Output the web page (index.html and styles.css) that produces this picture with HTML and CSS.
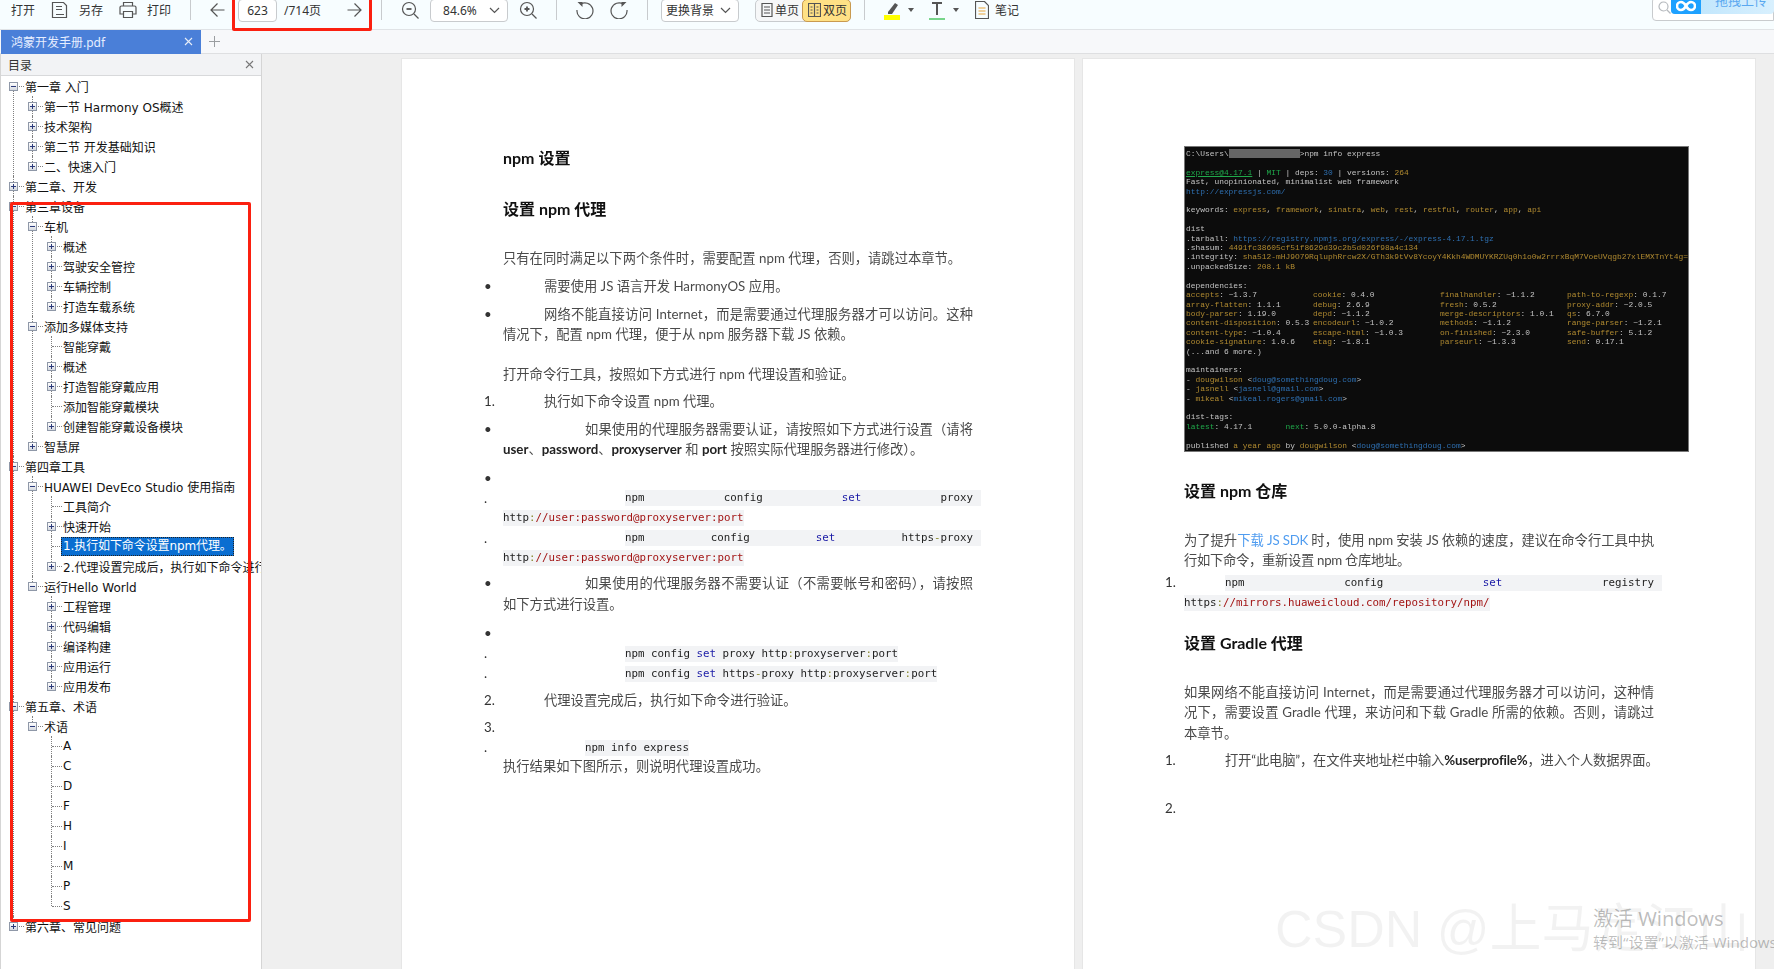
FILE: index.html
```html
<!DOCTYPE html>
<html lang="zh-CN">
<head>
    <meta charset="UTF-8">
    <title>鸿蒙开发手册.pdf</title>
    <link rel="stylesheet" href="styles.css">
</head>
<body>
<div class="app">
    <div class="toolbar">
        <div class="group file">
            <span>打开</span>
            <span class="tool">
                <svg class="ico" width="18" height="18" viewBox="0 0 18 18"><path d="M1.5 1.5h11l3 3v12h-14zM5 5.5h6M5 8.5h6M5 13.500h8"/></svg>
                另存
            </span>
            <span class="tool">
                <svg class="ico" width="18" height="18" viewBox="0 0 18 18"><path d="M4.500 5V1.500h9V5M4.500 13H1V6.500a1.500 1.500 0 0 1 1.500-1.500h13a1.500 1.500 0 0 1 1.500 1.500V13h-3.500M4.500 10.500h9v6h-9z"/></svg>
                打印
            </span>
        </div>
        <i class="sep"></i>
        <div class="group pager">
            <svg class="ico" width="15" height="16" viewBox="0 0 15 16"><path d="M14.500 8H1M7.500 1.500 1 8l6.500 6.500"/></svg>
            <span class="box page-no">623</span>
            <span class="total">/714页</span>
            <svg class="ico" width="15" height="16" viewBox="0 0 15 16"><path d="M.5 8H14M7.500 1.500 14 8l-6.500 6.500"/></svg>
        </div>
        <i class="sep"></i>
        <div class="group zoom">
            <svg class="ico" width="18" height="18" viewBox="0 0 18 18"><circle cx="8" cy="8" r="6.500"/><path d="M13 13l4.500 4.500"/><path class="bold" d="M5.500 8h5"/></svg>
            <span class="box combo percent">84.6%
                <svg class="chev" width="11" height="7" viewBox="0 0 11 7"><path d="M1 1l4.500 4.500L10 1"/></svg>
            </span>
            <svg class="ico" width="18" height="18" viewBox="0 0 18 18"><circle cx="8" cy="8" r="6.500"/><path d="M13 13l4.500 4.500"/><path class="bold" d="M5.500 8h5M8 5.500v5"/></svg>
        </div>
        <i class="sep"></i>
        <div class="group rotate">
            <svg class="ico" width="18" height="18" viewBox="0 0 18 18"><path d="M4.500 3.200A8 8 0 1 1 1 9"/><path class="solid" d="M1.500 1 6.500 1 6.500 6z"/></svg>
            <svg class="ico" width="18" height="18" viewBox="0 0 18 18"><path d="M13.500 3.200A8 8 0 1 0 17 9"/><path class="solid" d="M16.500 1 11.500 1 11.500 6z"/></svg>
        </div>
        <i class="sep sep-tight-r"></i>
        <span class="box combo background">更换背景
            <svg class="chev" width="11" height="7" viewBox="0 0 11 7"><path d="M1 1l4.500 4.500L10 1"/></svg>
        </span>
        <div class="segment">
            <span class="seg">
                <svg class="ico" width="12" height="14" viewBox="0 0 12 14"><path d="M1 .5h10v13H1zM3 4h6M3 7h6M3 10h6"/></svg>
                单页
            </span>
            <span class="seg on">
                <svg class="ico" width="13" height="14" viewBox="0 0 13 14"><path d="M.5.5h12v13H.5zM6.500.5v13M2.500 4h2M2.500 7h2M2.500 10h2M8.500 4h2M8.500 7h2M8.500 10h2"/></svg>
                双页
            </span>
        </div>
        <i class="sep sep-tight-l"></i>
        <div class="group marks">
            <span class="mark-tool">
                <svg width="16" height="19" viewBox="0 0 16 19"><path fill="#555" d="M4 11 11 2l3 2-6 9H4z"/><rect y="14" width="16" height="5.500" fill="#ffff00"/></svg>
                <i class="caret"></i>
            </span>
            <span class="mark-tool">
                <svg class="ico" width="16" height="19" viewBox="0 0 16 19"><path class="thick" d="M3 2h10M8 2v12"/><rect y="17" width="16" height="2" fill="#77d58a" stroke="none"/></svg>
                <i class="caret"></i>
            </span>
            <span class="tool note">
                <svg class="ico" width="14" height="18" viewBox="0 0 14 18"><path d="M.5.5h9l4 4v13H.5z"/><path class="orange" d="M3.500 7h7M3.500 10h7M3.500 13h7"/></svg>
                笔记
            </span>
        </div>
        <div class="search">
            <svg class="ico light" width="13" height="13" viewBox="0 0 13 13"><circle cx="5.500" cy="5.500" r="4.500"/><path d="M9 9l3.500 3.500"/></svg>
            <div class="upload">
                <span class="upload-logo">
                    <svg width="20" height="12" viewBox="0 0 20 12"><path d="M10 6C8 2.500 6.500 2 5 2a4 4 0 0 0 0 8c1.500 0 3-.5 5-4s3.500-4 5-4a4 4 0 0 1 0 8c-1.500 0-3-.5-5-4z"/></svg>
                </span>
                <span class="upload-text">拖拽上传</span>
            </div>
        </div>
    </div>

    <div class="tabbar">
        <div class="tab">鸿蒙开发手册.pdf
            <svg class="x" width="9" height="9" viewBox="0 0 9 9"><path d="M1 1l7 7M8 1 1 8"/></svg>
        </div>
        <svg class="add" width="11" height="11" viewBox="0 0 11 11"><path d="M5.500 0v11M0 5.500h11"/></svg>
    </div>

    <div class="main">
        <aside class="sidebar">
            <div class="side-head">目录
                <svg class="x" width="9" height="9" viewBox="0 0 9 9"><path d="M1 1l7 7M8 1 1 8"/></svg>
            </div>
            <ul class="tree">
                <li><div class="row"><i class="twist minus"></i><span>第一章 入门</span></div>
                    <ul>
                        <li><div class="row"><i class="twist plus"></i><span>第一节 Harmony OS概述</span></div></li>
                        <li><div class="row"><i class="twist plus"></i><span>技术架构</span></div></li>
                        <li><div class="row"><i class="twist plus"></i><span>第二节 开发基础知识</span></div></li>
                        <li><div class="row"><i class="twist plus"></i><span>二、快速入门</span></div></li>
                    </ul>
                </li>
                <li><div class="row"><i class="twist plus"></i><span>第二章、开发</span></div></li>
                <li><div class="row"><i class="twist minus"></i><span>第三章设备</span></div>
                    <ul>
                        <li><div class="row"><i class="twist minus"></i><span>车机</span></div>
                            <ul>
                                <li><div class="row"><i class="twist plus"></i><span>概述</span></div></li>
                                <li><div class="row"><i class="twist plus"></i><span>驾驶安全管控</span></div></li>
                                <li><div class="row"><i class="twist plus"></i><span>车辆控制</span></div></li>
                                <li><div class="row"><i class="twist plus"></i><span>打造车载系统</span></div></li>
                            </ul>
                        </li>
                        <li><div class="row"><i class="twist minus"></i><span>添加多媒体支持</span></div>
                            <ul>
                                <li><div class="row"><i class="twist leaf"></i><span>智能穿戴</span></div></li>
                                <li><div class="row"><i class="twist plus"></i><span>概述</span></div></li>
                                <li><div class="row"><i class="twist plus"></i><span>打造智能穿戴应用</span></div></li>
                                <li><div class="row"><i class="twist leaf"></i><span>添加智能穿戴模块</span></div></li>
                                <li><div class="row"><i class="twist plus"></i><span>创建智能穿戴设备模块</span></div></li>
                            </ul>
                        </li>
                        <li><div class="row"><i class="twist plus"></i><span>智慧屏</span></div></li>
                    </ul>
                </li>
                <li><div class="row"><i class="twist minus"></i><span>第四章工具</span></div>
                    <ul>
                        <li><div class="row"><i class="twist minus"></i><span>HUAWEI DevEco Studio 使用指南</span></div>
                            <ul>
                                <li><div class="row"><i class="twist leaf"></i><span>工具简介</span></div></li>
                                <li><div class="row"><i class="twist plus"></i><span>快速开始</span></div></li>
                                <li><div class="row"><i class="twist leaf"></i><span class="sel">1.执行如下命令设置npm代理。</span></div></li>
                                <li><div class="row"><i class="twist plus"></i><span>2.代理设置完成后，执行如下命令进行验证。</span></div></li>
                            </ul>
                        </li>
                        <li><div class="row"><i class="twist minus"></i><span>运行Hello World</span></div>
                            <ul>
                                <li><div class="row"><i class="twist plus"></i><span>工程管理</span></div></li>
                                <li><div class="row"><i class="twist plus"></i><span>代码编辑</span></div></li>
                                <li><div class="row"><i class="twist plus"></i><span>编译构建</span></div></li>
                                <li><div class="row"><i class="twist plus"></i><span>应用运行</span></div></li>
                                <li><div class="row"><i class="twist plus"></i><span>应用发布</span></div></li>
                            </ul>
                        </li>
                    </ul>
                </li>
                <li><div class="row"><i class="twist minus"></i><span>第五章、术语</span></div>
                    <ul>
                        <li><div class="row"><i class="twist minus"></i><span>术语</span></div>
                            <ul>
                                <li><div class="row"><i class="twist leaf"></i><span>A</span></div></li>
                                <li><div class="row"><i class="twist leaf"></i><span>C</span></div></li>
                                <li><div class="row"><i class="twist leaf"></i><span>D</span></div></li>
                                <li><div class="row"><i class="twist leaf"></i><span>F</span></div></li>
                                <li><div class="row"><i class="twist leaf"></i><span>H</span></div></li>
                                <li><div class="row"><i class="twist leaf"></i><span>I</span></div></li>
                                <li><div class="row"><i class="twist leaf"></i><span>M</span></div></li>
                                <li><div class="row"><i class="twist leaf"></i><span>P</span></div></li>
                                <li><div class="row"><i class="twist leaf"></i><span>S</span></div></li>
                            </ul>
                        </li>
                    </ul>
                </li>
                <li><div class="row"><i class="twist plus"></i><span>第六章、常见问题</span></div></li>
            </ul>
        </aside>

        <div class="viewer">
            <section class="page first">
                <h2 class="t-first">npm 设置</h2>
                <h2 class="t-next">设置 npm 代理</h2>
                <p class="after-title">只有在同时满足以下两个条件时，需要配置 npm 代理，否则，请跳过本章节。</p>
                <p class="ind1 gap-8"><span class="mark">•</span>需要使用 JS 语言开发 HarmonyOS 应用。</p>
                <p class="ind1"><span class="mark">•</span>网络不能直接访问 Internet，而是需要通过代理服务器才可以访问。这种情况下，配置 npm 代理，便于从 npm 服务器下载 JS 依赖。</p>
                <p class="gap-19">打开命令行工具，按照如下方式进行 npm 代理设置和验证。</p>
                <p class="ind1"><span class="mark">1.</span>执行如下命令设置 npm 代理。</p>
                <p class="ind2"><span class="mark">•</span>如果使用的代理服务器需要认证，请按照如下方式进行设置（请将 <b>user</b>、<b>password</b>、<b>proxyserver</b> 和 <b>port</b> 按照实际代理服务器进行修改）。</p>
                <p class="gap-8"><span class="mark">•</span>&nbsp;</p>
                <div class="line"><span class="mark m3">.</span><code class="cmd just">npm config <em>set</em> proxy</code></div>
                <div class="line"><code class="cmd">http<u>:</u><s>//user:password@proxyserver:port</s></code></div>
                <div class="line"><span class="mark m3">.</span><code class="cmd just">npm config <em>set</em> https<u>-</u>proxy</code></div>
                <div class="line"><code class="cmd">http<u>:</u><s>//user:password@proxyserver:port</s></code></div>
                <p class="ind2 gap-5"><span class="mark">•</span>如果使用的代理服务器不需要认证（不需要帐号和密码），请按照如下方式进行设置。</p>
                <p class="gap-9"><span class="mark">•</span>&nbsp;</p>
                <div class="line"><span class="mark m3">.</span><code class="cmd">npm config <em>set</em> proxy http<u>:</u>proxyserver<u>:</u>port</code></div>
                <div class="line"><span class="mark m3">.</span><code class="cmd">npm config <em>set</em> https<u>-</u>proxy http<u>:</u>proxyserver<u>:</u>port</code></div>
                <p class="ind1 gap-6"><span class="mark">2.</span>代理设置完成后，执行如下命令进行验证。</p>
                <p><span class="mark">3.</span>&nbsp;</p>
                <div class="line"><span class="mark m2">.</span><code class="cmd">npm info express</code></div>
                <p class="gap-neg">执行结果如下图所示，则说明代理设置成功。</p>
            </section>

            <section class="page second">
                <div class="term">
                    <div>C:\Users\<span class="hidden-name">               </span>&gt;npm info express</div>
                    <div>&nbsp;</div>
                    <div><span class="lnk-g">express@4.17.1</span> | <span class="g">MIT</span> | deps: <span class="c">30</span> | versions: <span class="y">264</span></div>
                    <div>Fast, unopinionated, minimalist web framework</div>
                    <div class="c">http://expressjs.com/</div>
                    <div>&nbsp;</div>
                    <div>keywords: <span class="y">express</span>, <span class="y">framework</span>, <span class="y">sinatra</span>, <span class="y">web</span>, <span class="y">rest</span>, <span class="y">restful</span>, <span class="y">router</span>, <span class="y">app</span>, <span class="y">api</span></div>
                    <div>&nbsp;</div>
                    <div>dist</div>
                    <div>.tarball: <span class="c">https://registry.npmjs.org/express/-/express-4.17.1.tgz</span></div>
                    <div>.shasum: <span class="y">4491fc38605cf51f8629d39c2b5d026f98a4c134</span></div>
                    <div>.integrity: <span class="y">sha512-mHJ9O79RqluphRrcw2X/GTh3k9tVv8YcoyY4Kkh4WDMUYKRZUq0h1o0w2rrrxBqM7VoeUVqgb27xlEMXTnYt4g==</span></div>
                    <div>.unpackedSize: <span class="y">208.1 kB</span></div>
                    <div>&nbsp;</div>
                    <div>dependencies:</div>
                    <div class="deps">
                        <span><span class="y">accepts</span>: ~1.3.7</span><span><span class="y">cookie</span>: 0.4.0</span><span><span class="y">finalhandler</span>: ~1.1.2</span><span><span class="y">path-to-regexp</span>: 0.1.7</span>
                        <span><span class="y">array-flatten</span>: 1.1.1</span><span><span class="y">debug</span>: 2.6.9</span><span><span class="y">fresh</span>: 0.5.2</span><span><span class="y">proxy-addr</span>: ~2.0.5</span>
                        <span><span class="y">body-parser</span>: 1.19.0</span><span><span class="y">depd</span>: ~1.1.2</span><span><span class="y">merge-descriptors</span>: 1.0.1</span><span><span class="y">qs</span>: 6.7.0</span>
                        <span><span class="y">content-disposition</span>: 0.5.3</span><span><span class="y">encodeurl</span>: ~1.0.2</span><span><span class="y">methods</span>: ~1.1.2</span><span><span class="y">range-parser</span>: ~1.2.1</span>
                        <span><span class="y">content-type</span>: ~1.0.4</span><span><span class="y">escape-html</span>: ~1.0.3</span><span><span class="y">on-finished</span>: ~2.3.0</span><span><span class="y">safe-buffer</span>: 5.1.2</span>
                        <span><span class="y">cookie-signature</span>: 1.0.6</span><span><span class="y">etag</span>: ~1.8.1</span><span><span class="y">parseurl</span>: ~1.3.3</span><span><span class="y">send</span>: 0.17.1</span>
                    </div>
                    <div>(...and 6 more.)</div>
                    <div>&nbsp;</div>
                    <div>maintainers:</div>
                    <div>- <span class="y">dougwilson</span> &lt;<span class="c">doug@somethingdoug.com</span>&gt;</div>
                    <div>- <span class="y">jasnell</span> &lt;<span class="c">jasnell@gmail.com</span>&gt;</div>
                    <div>- <span class="y">mikeal</span> &lt;<span class="c">mikeal.rogers@gmail.com</span>&gt;</div>
                    <div>&nbsp;</div>
                    <div>dist-tags:</div>
                    <div><span class="g">latest</span>: 4.17.1       <span class="g">next</span>: 5.0.0-alpha.8</div>
                    <div>&nbsp;</div>
                    <div>published <span class="y">a year ago</span> by <span class="y">dougwilson</span> &lt;<span class="c">doug@somethingdoug.com</span>&gt;</div>
                </div>
                <h2 class="t-term">设置 npm 仓库</h2>
                <p class="after-title snug">为了提升<a>下载 JS SDK</a> 时，使用 npm 安装 JS 依赖的速度，建议在命令行工具中执行如下命令，重新设置 npm 仓库地址。</p>
                <div class="line gap-2"><span class="mark m1">1.</span><code class="cmd just">npm config <em>set</em> registry</code></div>
                <div class="line"><code class="cmd">https<u>:</u><s>//mirrors.huaweicloud.com/repository/npm/</s></code></div>
                <h2 class="t-gradle">设置 Gradle 代理</h2>
                <p class="after-title">如果网络不能直接访问 Internet，而是需要通过代理服务器才可以访问，这种情况下，需要设置 Gradle 代理，来访问和下载 Gradle 所需的依赖。否则，请跳过本章节。</p>
                <p class="ind1 squeeze"><span class="mark">1.</span>打开“此电脑”，在文件夹地址栏中输入<b>%userprofile%</b>，进入个人数据界面。</p>
                <p class="ind1 gap-27"><span class="mark">2.</span>&nbsp;</p>
            </section>
        </div>
    </div>

    <!-- annotations painted over the screenshot -->
    <div class="redbox redbox-pager"></div>
    <div class="redbox redbox-tree"></div>
    <div class="csdn">CSDN @上马定江山</div>
    <div class="activate">
        <div class="activate-title">激活 Windows</div>
        <div>转到“设置”以激活 Windows。</div>
    </div>
</div>
</body>
</html>
```

FILE: styles.css
```css
* {
    margin: 0;
    padding: 0;
    box-sizing: border-box;
}

html, body {
    height: 100%;
    overflow: hidden;
}

body {
    font-family: "Noto Sans", "Noto Sans CJK SC", sans-serif;
    font-size: 12px;
    color: #333;
    background: #efefef;
}

.app {
    position: relative;
    width: 1774px;
    height: 969px;
    overflow: hidden;
    display: flex;
    flex-direction: column;
}

/* toolbar */
.toolbar {
    flex: none;
    height: 30px;
    padding-bottom: 9px;
    display: flex;
    align-items: center;
    background: #f7fdff;
    border-bottom: 1px solid #e0e3e6;
}

.group {
    display: flex;
    align-items: center;
}

.file {
    padding-left: 11px;
    gap: 16px;
}

.tool {
    display: flex;
    align-items: center;
    gap: 10px;
}

.ico {
    fill: none;
    stroke: #555;
    stroke-width: 1.2;
}

.ico.light {
    stroke: #b5b9bd;
}

.ico .bold {
    stroke-width: 1.8;
}

.ico .thick {
    stroke-width: 2;
}

.ico .solid {
    fill: #555;
    stroke: none;
}

.ico .orange {
    stroke: #e8a33a;
}

.sep {
    flex: none;
    width: 1px;
    height: 20px;
    margin: 0 19px;
    background: #c8cbce;
}

.sep-tight-r {
    margin-right: 13px;
}

.sep-tight-l {
    margin-left: 13px;
}

.box {
    height: 23px;
    display: flex;
    align-items: center;
    background: #fff;
    border: 1px solid #c8cbce;
    border-radius: 4px;
}

.pager .page-no {
    width: 39px;
    margin: 0 7px 0 13px;
    justify-content: center;
}

.total {
    width: 63px;
}

.zoom {
    gap: 11px;
}

.combo {
    width: 78px;
    padding-left: 12px;
    justify-content: space-between;
    padding-right: 7px;
}

.background {
    padding-left: 4px;
}

.chev {
    fill: none;
    stroke: #555;
    stroke-width: 1.2;
}

.rotate {
    gap: 16px;
}

.segment {
    display: flex;
    width: 96px;
    height: 23px;
    margin-left: 16px;
    background: #f6f7f8;
    border: 1px solid #c8cbce;
    border-radius: 5px;
}

.seg {
    flex: 1;
    display: flex;
    align-items: center;
    gap: 2px;
    padding-left: 5px;
}

.seg.on {
    margin: -1px;
    background: #ffe185;
    border: 1px solid #c99a50;
    border-radius: 5px;
}

.marks {
    gap: 15px;
}

.mark-tool {
    display: flex;
    align-items: center;
    gap: 8px;
}

.caret {
    width: 0;
    height: 0;
    border: 3px solid transparent;
    border-top: 4px solid #555;
    border-bottom: 0;
}

.note {
    margin-left: 1px;
    gap: 6px;
}

.search {
    position: relative;
    width: 122px;
    height: 24px;
    margin-left: auto;
    margin-top: -2px;
    padding: 3px 0 0 5px;
    background: #fff;
    border: 1px solid #c8cbce;
    border-radius: 4px 0 0 4px;
}

.upload {
    position: absolute;
    left: 18px;
    top: -1px;
    width: 103px;
    height: 17px;
    display: flex;
    background: linear-gradient(90deg, #b9e3fc, #d8f0fe);
    border-radius: 0 0 4px 4px;
    overflow: hidden;
}

.upload-logo {
    flex: none;
    width: 30px;
    display: flex;
    align-items: center;
    justify-content: center;
    background: #1ea1ff;
}

.upload-logo path {
    fill: none;
    stroke: #fff;
    stroke-width: 2.6;
}

.upload-text {
    margin: -7px 0 0 14px;
    color: #5aa8f0;
    font-size: 13px;
}

/* tabs */
.tabbar {
    flex: none;
    height: 24px;
    display: flex;
    align-items: center;
    background: #f7f8fa;
    border-bottom: 1px solid #dedfe1;
}

.tab {
    width: 200px;
    height: 24px;
    margin-left: 1px;
    padding: 0 8px 0 10px;
    display: flex;
    align-items: center;
    justify-content: space-between;
    background: #4a7fd8;
    color: #e6eeff;
    font-size: 12px;
}

.x {
    fill: none;
    stroke: #e8eef8;
    stroke-width: 1.1;
}

.add {
    margin-left: 8px;
    stroke: #9a9da0;
}

/* outline panel */
.main {
    flex: 1;
    min-height: 0;
    display: flex;
}

.sidebar {
    flex: none;
    width: 262px;
    background: #fff;
    border-left: 1px solid #d5d5d5;
    border-right: 1px solid #d5d5d5;
    overflow: hidden;
}

.side-head {
    height: 22px;
    padding: 0 7px;
    display: flex;
    align-items: center;
    justify-content: space-between;
    background: #f2f3f5;
    border-bottom: 1px solid #d8d9db;
    font-size: 12px;
}

.side-head .x {
    stroke: #777;
}

.tree {
    list-style: none;
    margin-left: -1px;
    font-family: "DejaVu Sans", "Noto Sans CJK SC", sans-serif;
    color: #111;
    white-space: nowrap;
}

.tree ul {
    list-style: none;
    padding-left: 19px;
}

.tree li {
    position: relative;
}

.tree li::before {
    content: "";
    position: absolute;
    left: 13px;
    top: 0;
    bottom: 0;
    border-left: 1px dotted #808080;
}

.tree li:last-child::before {
    bottom: auto;
    height: 10px;
}

.tree > li:first-child::before {
    top: 10px;
}

.row {
    position: relative;
    height: 20px;
    padding-left: 9px;
    display: flex;
    align-items: center;
    gap: 7px;
}

.row::before {
    content: "";
    position: absolute;
    left: 14px;
    top: 10px;
    width: 10px;
    border-top: 1px dotted #808080;
}

.twist {
    position: relative;
    flex: none;
    width: 9px;
    height: 9px;
    border: 1px solid #8f98a8;
}

.twist.leaf {
    visibility: hidden;
}

.twist.minus {
    background:
        linear-gradient(#2b3a7a, #2b3a7a) center / 5px 1px no-repeat,
        linear-gradient(#fff, #d5d9e0);
}

.twist.plus {
    background:
        linear-gradient(#2b3a7a, #2b3a7a) center / 5px 1px no-repeat,
        linear-gradient(#2b3a7a, #2b3a7a) center / 1px 5px no-repeat,
        linear-gradient(#fff, #d5d9e0);
}

.sel {
    position: relative;
    margin-left: -2px;
    padding: 0 2px;
    height: 19px;
    line-height: 19px;
    background: #0a6ed1;
    color: #fff;
    letter-spacing: -.1px;
    outline: 1px dotted #222;
    outline-offset: -1px;
}

/* pdf pages */
.viewer {
    flex: 1;
    min-width: 0;
    padding: 5px 0 0 140px;
    display: flex;
    gap: 9px;
    overflow: hidden;
}

.page {
    flex: none;
    width: 672px;
    padding-left: 101px;
    padding-right: 101px;
    background: #fff;
    box-shadow: 0 0 0 1px #e6e6e6;
    font-family: Lato, "Noto Sans CJK SC", sans-serif;
    font-size: 13.300px;
    line-height: 20.500px;
    color: #4a4a4a;
}

.page > * {
    filter: blur(.3px);
}

.first {
    padding-top: 89px;
}

.second {
    padding-top: 87px;
}

.page h2 {
    font-size: 16px;
    line-height: 20px;
    font-weight: 700;
    color: #111;
}

.t-next {
    margin-top: 30.500px;
}

.t-term {
    margin-top: 28.500px;
}

.t-gradle {
    margin-top: 20px;
}

.page p {
    margin-top: 7px;
    text-align: justify;
}

.page p.after-title {
    margin-top: 29px;
}

.page b {
    color: #222;
}

.page a {
    color: #4f9cf0;
}

.ind1 {
    text-indent: 41px;
}

.ind2 {
    text-indent: 82px;
}

.snug {
    letter-spacing: -.3px;
}

.squeeze {
    letter-spacing: -.18px;
    white-space: nowrap;
}

.page p.gap-5 { margin-top: 5px; }
.page p.gap-6 { margin-top: 6px; }
.page p.gap-8 { margin-top: 8px; }
.page p.gap-9 { margin-top: 9px; }
.page p.gap-19 { margin-top: 19px; }
.page p.gap-27 { margin-top: 27.500px; }
.page p.gap-neg { margin-top: -2px; }

.mark {
    float: left;
    width: 19px;
    margin-left: -19px;
    text-indent: 0;
    color: #333;
}

.line {
    display: flex;
    align-items: center;
    height: 20px;
}

.line .mark {
    float: none;
    flex: none;
    margin-left: -19px;
}

.line .m1 { width: 60px; }
.line .m2 { width: 101px; }
.line .m3 { width: 141px; }

.gap-2 {
    margin-top: 2px;
}

.cmd {
    flex: none;
    height: 16px;
    line-height: 16px;
    background: #f2f3f5;
    font-family: "DejaVu Sans Mono", monospace;
    font-size: 10.800px;
    color: #222;
    white-space: nowrap;
}

.cmd.just {
    flex: 1;
    margin-right: -8px;
    padding-right: 8px;
    white-space: normal;
    text-align: justify;
    text-align-last: justify;
}

.cmd em {
    font-style: normal;
    color: #1a1aa6;
}

.cmd u {
    text-decoration: none;
    color: #8a8a30;
}

.cmd s {
    text-decoration: none;
    color: #a31515;
}

/* console picture */
.term {
    width: 505px;
    height: 306px;
    padding: 2px 0 0 1px;
    background: #0c0c0c;
    border: 1px solid #777;
    overflow: hidden;
    font-family: "Liberation Mono", monospace;
    font-size: 7.900px;
    line-height: 9.400px;
    color: #c4c4c4;
}

.term > div,
.deps > span {
    white-space: pre;
}

.term > .deps {
    display: grid;
    grid-template-columns: repeat(4, 127px);
    white-space: normal;
}

.hidden-name {
    background: #666;
}

.y { color: #b08a30; }
.c { color: #2e6fb0; }
.g { color: #1fa84a; }

.lnk-g {
    color: #1fa84a;
    text-decoration: underline;
}

/* things lying over the page */
.redbox {
    position: absolute;
    border: 3px solid #fb2010;
    border-radius: 2px;
}

.redbox-pager {
    left: 232px;
    top: -4px;
    width: 140px;
    height: 35px;
}

.redbox-tree {
    left: 10px;
    top: 202px;
    width: 241px;
    height: 720px;
}

.csdn {
    position: absolute;
    left: 1275px;
    top: 898px;
    font-family: "Liberation Sans", "Noto Sans CJK SC", sans-serif;
    font-size: 52px;
    line-height: 62px;
    color: rgba(0, 0, 0, .05);
    white-space: nowrap;
}

.activate {
    position: absolute;
    left: 1593px;
    top: 906px;
    font-size: 15px;
    line-height: 20px;
    color: rgba(0, 0, 0, .26);
    white-space: nowrap;
}

.activate-title {
    font-size: 20px;
    line-height: 26px;
}
```
